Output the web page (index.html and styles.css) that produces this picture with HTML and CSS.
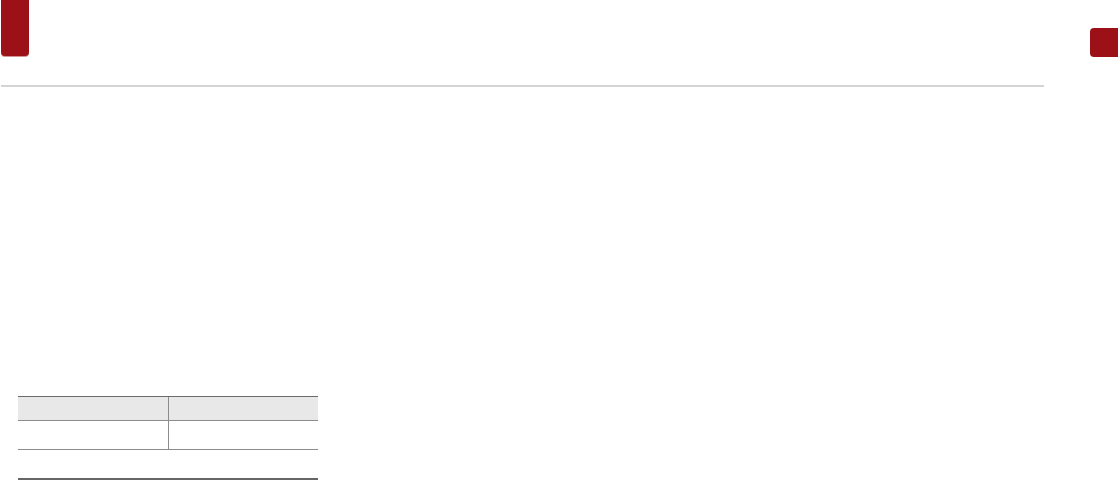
FILE: index.html
```html
<!DOCTYPE html>
<html lang="ko">
<head>
  <meta charset="UTF-8">
  <title>페이지</title>
  <link rel="stylesheet" href="styles.css">
</head>
<body>
  <div class="layout">
    <div class="main">
      <div class="tab"></div>
      <div class="rule"></div>

      <!-- 표 -->
      <div class="spec">
        <div class="cell head"></div>
        <div class="cell head col2"></div>
        <div class="cell"></div>
        <div class="cell col2"></div>
      </div>
      <div class="spec-end"></div>
    </div>

    <div class="side">
      <div class="chip"></div>
    </div>
  </div>
</body>
</html>
```

FILE: styles.css
```css
body {
  margin: 0;
  padding: 0;
  height: 480px;
  background: #fff;
  font-family: "Noto Sans", "Noto Sans CJK KR", sans-serif;
  overflow: hidden;
}
.layout {
  display: flex;
}
.main {
  width: 1043px;
  padding-left: 1px;
}
.tab {
  width: 28px;
  height: 56px;
  background: #9c1117;
  border-radius: 0 0 4px 4px;
  box-shadow: 0 1px 0 rgba(156,17,23,0.45);
}
.rule {
  margin-top: 29px;
  height: 2px;
  background: #d4d4d4;
}

/* 표 */
.spec {
  margin: 309px 0 0 17px;
  width: 300px;
  display: grid;
  grid-template-columns: 150px 150px;
  border-top: 1px solid #6a6a6a;
}
.cell {
  height: 28px;
  border-bottom: 1px solid #8c8c8c;
}
.cell.head {
  height: 23px;
  background: #e8e8e8;
}
.col2 {
  border-left: 1px solid #8c8c8c;
}
.spec-end {
  margin: 28px 0 0 17px;
  width: 300px;
  height: 2px;
  background: #666;
}

.side {
  flex: 1;
  padding-top: 28px;
}
.chip {
  margin-left: 46px;
  width: 28px;
  height: 29px;
  background: #9c1117;
  border-radius: 4px 0 0 4px;
}
```
